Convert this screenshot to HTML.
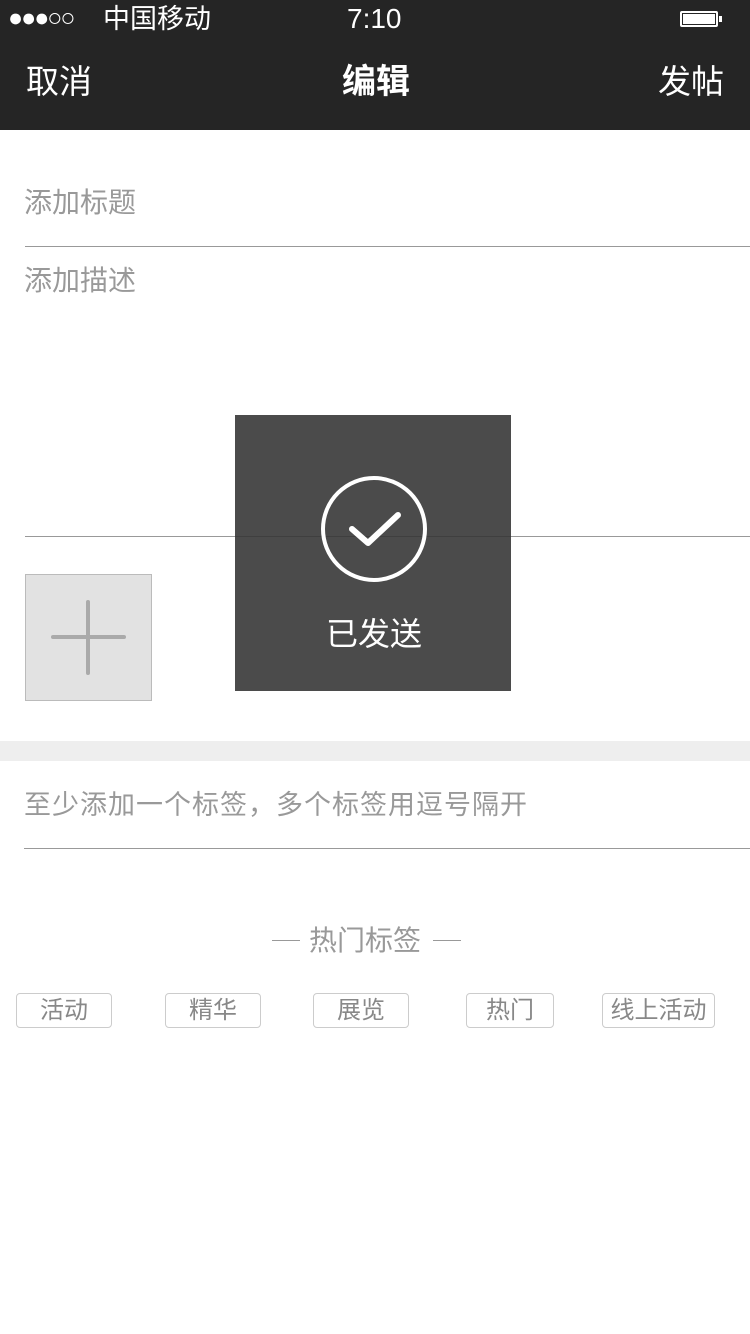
<!DOCTYPE html>
<html><head><meta charset="utf-8"><style>
*{margin:0;padding:0;box-sizing:border-box}
body{width:750px;height:1334px;background:#fff;position:relative;overflow:hidden;font-family:"Liberation Sans","Noto Sans CJK SC",sans-serif}
.a{position:absolute;white-space:nowrap}
.hdr{position:absolute;left:0;top:0;width:750px;height:130px;background:#252525;color:#fff}
.g{color:#999;font-size:28px}
.line{position:absolute;height:1px;background:#999}
.tag{position:absolute;top:993px;height:35px;border:1px solid #ccc;border-radius:4px;color:#888;font-size:24px;text-align:center;line-height:33px}
</style></head><body>
<div class="hdr">
<div class="a" style="left:8px;top:2px;font-size:25px;line-height:32px;letter-spacing:-2px">●●●○○</div>
<div class="a" style="left:103px;top:2px;font-size:27px;line-height:34px">中国移动</div>
<div class="a" style="left:347px;top:2px;font-size:28px;line-height:34px">7:10</div>
<div class="a" style="left:680px;top:11px;width:38px;height:16px;border:2px solid #fff;border-radius:2px;padding:1px"><div style="background:#fff;width:100%;height:100%"></div></div>
<div class="a" style="left:719px;top:16px;width:3px;height:6px;background:#fff"></div>
<div class="a" style="left:26px;top:62px;font-size:33px;line-height:40px">取消</div>
<div class="a" style="left:342px;top:62px;font-size:34px;line-height:40px;font-weight:bold">编辑</div>
<div class="a" style="left:658px;top:62px;font-size:33px;line-height:40px">发帖</div>
</div>
<div class="a g" style="left:24px;top:184px;line-height:38px">添加标题</div>
<div class="line" style="left:25px;top:246px;width:725px"></div>
<div class="a g" style="left:24px;top:262px;line-height:38px">添加描述</div>
<div class="line" style="left:25px;top:536px;width:725px"></div>
<div class="a" style="left:25px;top:574px;width:127px;height:127px;background:#e2e2e2;border:1px solid #bbb"></div>
<div class="a" style="left:51px;top:635px;width:75px;height:4px;background:#aaa;border-radius:2px"></div>
<div class="a" style="left:86px;top:600px;width:4px;height:75px;background:#aaa;border-radius:2px"></div>
<div class="a" style="left:0;top:741px;width:750px;height:20px;background:#eee"></div>
<div class="a g" style="left:24px;top:786px;line-height:38px;font-size:27px;letter-spacing:1px">至少添加一个标签，多个标签用逗号隔开</div>
<div class="line" style="left:24px;top:848px;width:726px"></div>
<div class="a" style="left:272px;top:940px;width:28px;height:1px;background:#999"></div>
<div class="a g" style="left:309px;top:922px;line-height:38px">热门标签</div>
<div class="a" style="left:433px;top:940px;width:28px;height:1px;background:#999"></div>
<div class="tag" style="left:16px;width:96px">活动</div>
<div class="tag" style="left:165px;width:96px">精华</div>
<div class="tag" style="left:313px;width:96px">展览</div>
<div class="tag" style="left:466px;width:88px">热门</div>
<div class="tag" style="left:602px;width:113px">线上活动</div>
<div class="a" style="left:235px;top:415px;width:276px;height:276px;background:rgba(50,50,50,0.88)"></div>
<svg class="a" style="left:320px;top:475px" width="108" height="108" viewBox="0 0 108 108"><circle cx="54" cy="54" r="51" fill="none" stroke="#fff" stroke-width="4"/><path d="M32 54 L48 68 L78 40" fill="none" stroke="#fff" stroke-width="6" stroke-linecap="round" stroke-linejoin="round"/></svg>
<div class="a" style="left:326px;top:614px;font-size:32px;line-height:40px;color:#fff">已发送</div>
</body></html>
